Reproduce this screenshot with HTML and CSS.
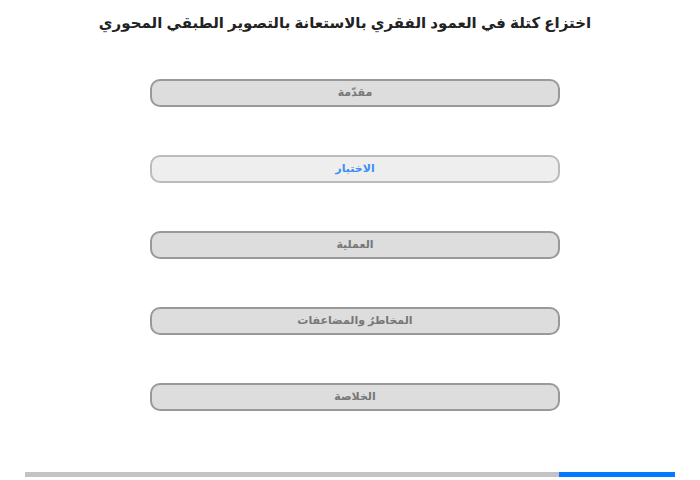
FILE: index.html
```html
<!DOCTYPE html>
<html lang="ar" dir="rtl">
<head>
<meta charset="utf-8">
<link rel="stylesheet" href="styles.css">
</head>
<body>
<h1 class="title">اختزاع كتلة في العمود الفقري بالاستعانة بالتصوير الطبقي المحوري</h1>
<nav class="menu">
  <div class="item">مقدّمة</div>
  <div class="item active">الاختبار</div>
  <div class="item">العملية</div>
  <div class="item">المخاطرُ والمضاعفات</div>
  <div class="item">الخلاصة</div>
</nav>
<div class="progress"><div class="fill" style="width:116px"></div></div>
</body>
</html>
```
FILE: styles.css
```css
html, body {
  margin: 0;
  padding: 0;
  background: #fff;
}
body {
  width: 700px;
  height: 480px;
  font-family: "Liberation Sans", "DejaVu Sans", sans-serif;
  display: flex;
  flex-direction: column;
}
.title {
  margin: 12px 0 0 0;
  font-size: 15px;
  font-weight: bold;
  color: #222;
  text-align: center;
  line-height: 22px;
  padding-right: 10px;
}
.menu {
  display: flex;
  flex-direction: column;
  gap: 48px;
  margin-top: 45px;
  margin-left: 150px;
  margin-right: 140px;
}
.item {
  height: 24px;
  border: 2px solid #999;
  border-radius: 10px;
  background: #ddd;
  color: #777;
  font-size: 11px;
  font-weight: bold;
  text-align: center;
  line-height: 23px;
}
.item.active {
  background: #eee;
  border-color: #bbb;
  color: #3d8ef5;
}
.progress {
  margin: auto 25px 3px 25px;
  height: 5px;
  background: #c3c3c3;
  display: flex;
  justify-content: flex-start;
}
.fill {
  height: 100%;
  background: #007bff;
}
```
